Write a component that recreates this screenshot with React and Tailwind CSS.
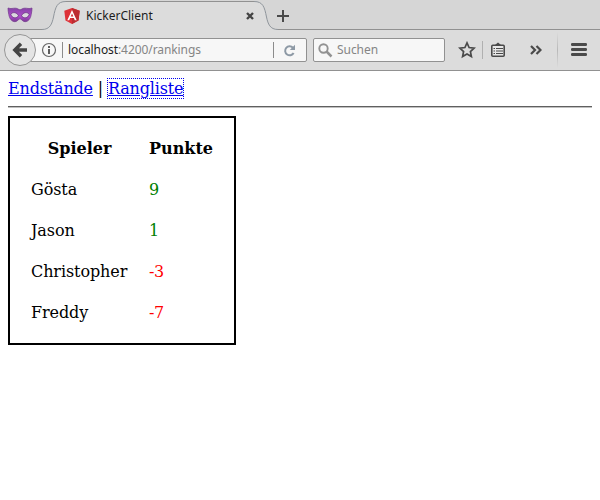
import React from 'react';

const ui = "font-['Noto_Sans','Open_Sans',sans-serif]";

function Mask() {
  return (
    <svg className="ml-[7px] mt-[7px] shrink-0" width="26" height="16" viewBox="0 0 26 16">
      <defs>
        <linearGradient id="mask" x1="0" y1="0" x2="0" y2="1">
          <stop offset="0" stopColor="#8443a5" />
          <stop offset="0.6" stopColor="#b04cce" />
          <stop offset="1" stopColor="#7b3a94" />
        </linearGradient>
      </defs>
      <path d="M1 1C4 2.200 6 1 8.500 1.200c2 0 3.300 1.600 4.500 1.600S15.500 1.200 17.500 1.200C20 1 22 2.200 25 1c0 2-.3 4-.8 6.500C23.500 12 21 14.700 18 14.700c-2.500 0-3.500-2.900-5-2.900s-2.500 2.900-5 2.900C5 14.700 2.500 12 1.800 7.500 1.300 5 1 3 1 1z" fill="url(#mask)" stroke="#71378b" strokeWidth=".7" />
      <path d="M3.800 7.300C5.500 4.700 9.800 5 11.600 8.800 9.500 11.800 5 11.700 3.800 7.300zM22.200 7.300C20.500 4.700 16.200 5 14.400 8.800c2.100 3 6.600 2.900 7.800-1.500z" fill="#dcd8df" stroke="#6b3185" strokeWidth=".9" />
    </svg>
  );
}

function TabStrip() {
  return (
    <div className="flex h-[30px] bg-[#d6d6d6]">
      <div className="flex w-[42px] items-start border-b border-[#919191]">
        <Mask />
      </div>
      <svg className="shrink-0" width="24" height="30" viewBox="0 0 24 30">
        <path d="M0 29.500C8 29.500 10 24 11.500 17 13.500 7 15 1.500 24 1.500V30H0z" fill="#dcdcdc" />
        <path d="M0 29.500C8 29.500 10 24 11.500 17 13.500 7 15 1.500 24 1.500" fill="none" stroke="#8f959b" />
      </svg>
      <div className="mt-px flex h-[29px] w-[188px] items-center border-t border-[#919191] bg-[#dcdcdc]">
        <svg className="-ml-[2px] shrink-0" width="16" height="16" viewBox="0 0 16 16">
          <path d="M8 0l7.700 2.700-1.200 9.800L8 16l-6.500-3.500L.3 2.700z" fill="#dd3238" />
          <path d="M8 0l7.700 2.700-1.200 9.800L8 16z" fill="#bd2d32" />
          <path fillRule="evenodd" d="M8 1.900l4.700 10.300h-1.900l-.9-2.200H6.100l-.9 2.200H3.300zM8 5.400L6.700 8.500h2.600z" fill="#fff" />
        </svg>
        <span className={`${ui} ml-[6px] text-[12px] leading-4 text-[#1c1c1c]`}>KickerClient</span>
        <svg className="ml-auto shrink-0" width="8" height="8" viewBox="0 0 8 8">
          <path d="M1 1l6 6M7 1L1 7" stroke="#444" strokeWidth="2.400" />
        </svg>
      </div>
      <svg className="shrink-0" width="24" height="30" viewBox="0 0 24 30">
        <path d="M0 1.500C9 1.500 10.500 7 12.500 17 14 24 16 29.500 24 29.500V30H0z" fill="#dcdcdc" />
        <path d="M0 1.500C9 1.500 10.500 7 12.500 17 14 24 16 29.500 24 29.500" fill="none" stroke="#8f959b" />
      </svg>
      <div className="flex-1 border-b border-[#919191]">
        <svg className="-ml-px mt-[10px]" width="12" height="12" viewBox="0 0 12 12">
          <path d="M6 0v12M0 6h12" stroke="#4a4a4a" strokeWidth="2" />
        </svg>
      </div>
    </div>
  );
}

function Toolbar() {
  return (
    <div className={`${ui} flex h-[41px] items-center border-b border-[#919191] bg-[#dcdcdc] text-[12px] leading-4`}>
      <svg className="z-10 ml-[3px] shrink-0" width="34" height="34" viewBox="0 0 34 34">
        <circle cx="17" cy="17" r="15.500" fill="#e4e4e4" stroke="#969696" />
        <path d="M24 17H12.500M18 10.800L11.800 17l6.200 6.200" fill="none" stroke="#454545" strokeWidth="3.400" />
      </svg>
      <div className="-ml-[7px] flex h-6 w-[277px] items-center rounded-r-[2px] border border-[#919191] bg-[#f7f7f7]">
        <svg className="ml-[10px] shrink-0" width="16" height="16" viewBox="0 0 16 16">
          <circle cx="8" cy="8" r="6.500" fill="none" stroke="#666" strokeWidth="1.200" />
          <path d="M8 7v5M8 4v2" stroke="#555" strokeWidth="1.900" />
        </svg>
        <div className="ml-[5px] h-4 w-px bg-[#8c8c8c]" />
        <span className="ml-[5px] tracking-[-0.08px] text-[#858585]"><span className="text-[#1c1c1c]">localhost</span>:4200/rankings</span>
        <div className="ml-auto h-4 w-px bg-[#8c8c8c]" />
        <svg className="ml-[9px] mr-[10px] shrink-0" width="13" height="13" viewBox="0 0 13 13">
          <path d="M9.900 3.700A4.500 4.500 0 1 0 10.600 9" fill="none" stroke="#8d99a5" strokeWidth="2" />
          <path d="M12 .8V6H6.800z" fill="#8d99a5" />
        </svg>
      </div>
      <div className="ml-[6px] flex h-6 w-[132px] items-center rounded-[2px] border border-[#919191] bg-[#f7f7f7]">
        <svg className="ml-[4px] shrink-0" width="15" height="15" viewBox="0 0 15 15">
          <circle cx="5.500" cy="5.500" r="4.200" fill="none" stroke="#929292" strokeWidth="1.900" />
          <path d="M8.500 8.500l5 5" stroke="#929292" strokeWidth="2.500" />
        </svg>
        <span className="ml-[4px] tracking-[-0.06px] text-[#858585]">Suchen</span>
      </div>
      <svg className="ml-[13px] shrink-0" width="18" height="18" viewBox="0 0 18 18">
        <path d="M9 1.900l2.100 4.600 5 .6-3.700 3.400 1 5L9 13l-4.400 2.500 1-5L1.900 7.100l5-.6z" fill="none" stroke="#4a4a4a" strokeWidth="1.700" />
      </svg>
      <div className="ml-[6px] h-[18px] w-px bg-[#b0b0b0]" />
      <svg className="ml-[8px] shrink-0" width="14" height="16" viewBox="0 0 14 16">
        <path d="M4 3L7 .5 10 3z" fill="#4a4a4a" />
        <rect x=".8" y="3.300" width="12.400" height="10.900" rx="1" fill="#e8e8e8" stroke="#4a4a4a" strokeWidth="1.600" />
        <path d="M2.500 6.500h1.500M5 6.500h7M2.500 9h1.500M5 9h7M2.500 11.500h1.500M5 11.500h7" stroke="#4a4a4a" strokeWidth="1" />
      </svg>
      <svg className="ml-[25px] shrink-0" width="12" height="10" viewBox="0 0 12 10">
        <path d="M1 1l4 4-4 4M6.500 1l4 4-4 4" fill="none" stroke="#4a4a4a" strokeWidth="2.200" />
      </svg>
      <div className="ml-[15px] h-[36px] w-px bg-gradient-to-b from-[#dcdcdc] via-[#b8b8b8] to-[#dcdcdc]" />
      <svg className="ml-[13px] shrink-0" width="16" height="14" viewBox="0 0 16 14">
        <path d="M1.300 1.500h13.400M1.300 6.500h13.400M1.300 11.500h13.400" stroke="#4a4a4a" strokeWidth="2.800" strokeLinecap="round" />
      </svg>
    </div>
  );
}

const players = [
  ['Gösta', 9],
  ['Jason', 1],
  ['Christopher', -3],
  ['Freddy', -7],
];

export default function App() {
  return (
    <div className="h-[500px] w-[600px] overflow-hidden bg-white">
      <TabStrip />
      <Toolbar />
      <main className="px-2 pt-[7px] font-['DejaVu_Serif',serif] text-[16px] leading-[19px] text-black">
        <nav className="flex h-[21px] items-center whitespace-pre tracking-[-0.17px]">
          <a className="text-[#0000ee] underline">Endstände</a>
          <span> | </span>
          <a className="text-[#0000ee] underline outline-dotted outline-1 outline-[#0000ee]">Rangliste</a>
        </nav>
        <div className="mt-[7px] h-[2px] border-b border-t border-b-[#c0c0c0] border-t-[#606060]" />
        <div className="mt-2 grid h-[229px] w-[228px] auto-rows-[41px] grid-cols-[97px_64px] content-start items-center gap-x-[21px] border-2 border-black px-[21px] pt-[10px]">
          <div className="text-center font-bold">Spieler</div>
          <div className="text-center font-bold">Punkte</div>
          {players.map(([name, points]) => (
            <React.Fragment key={name}>
              <div className="tracking-[-0.09px]">{name}</div>
              <div className={points > 0 ? 'text-[#008000]' : 'tracking-[-0.3px] text-[#ff0000]'}>{points}</div>
            </React.Fragment>
          ))}
        </div>
      </main>
    </div>
  );
}
